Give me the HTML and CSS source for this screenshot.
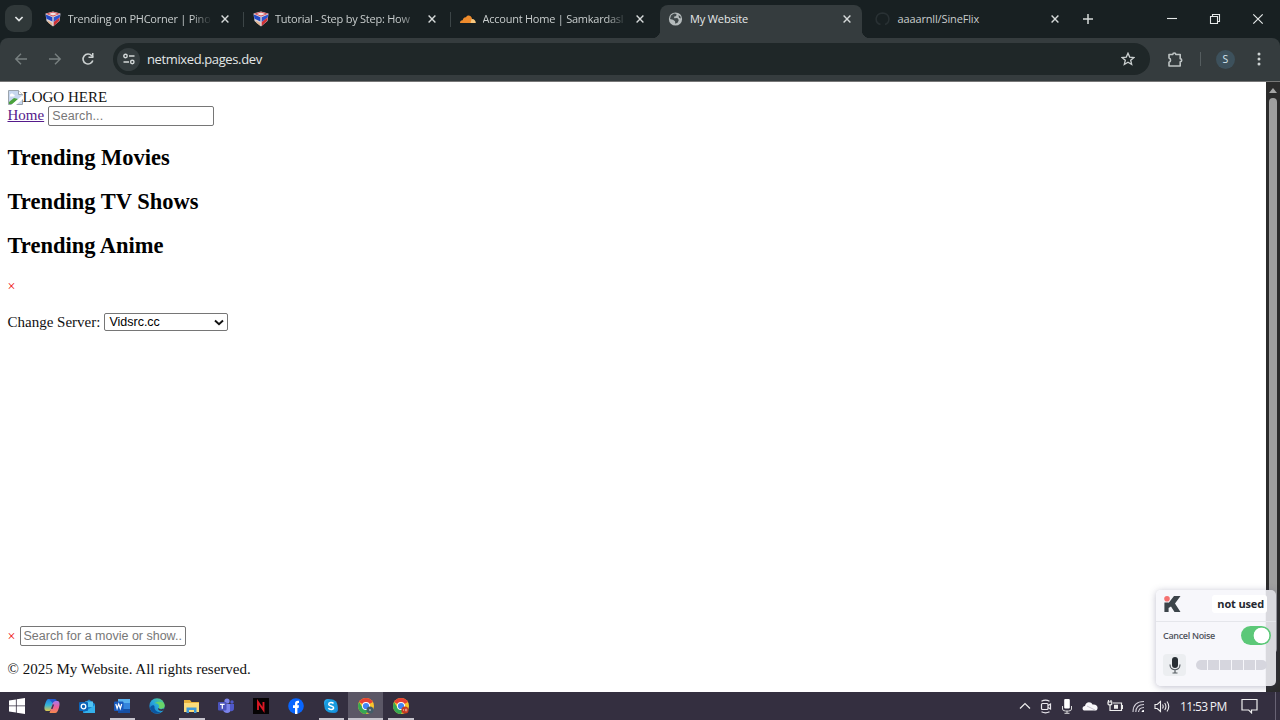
FILE: index.html
```html
<!DOCTYPE html>
<html lang="en">
<head>
<meta charset="utf-8">
<title>My Website</title>
<link rel="stylesheet" href="styles.css">
</head>
<body>
<svg width="0" height="0" class="defs">
  <defs>
    <linearGradient id="cop-l" x1="0" y1="0" x2="0" y2="1"><stop offset="0" stop-color="#1f7fe0"/><stop offset=".5" stop-color="#35b5d8"/><stop offset="1" stop-color="#e0c84a"/></linearGradient>
    <linearGradient id="cop-r" x1="0" y1="0" x2="0" y2="1"><stop offset="0" stop-color="#a978ea"/><stop offset=".5" stop-color="#ec5f9c"/><stop offset="1" stop-color="#f58a4b"/></linearGradient>
    <linearGradient id="edge" x1="0" y1="1" x2="1" y2="0"><stop offset="0" stop-color="#1467b8"/><stop offset=".5" stop-color="#27a8df"/><stop offset="1" stop-color="#5fd66c"/></linearGradient>
    <symbol id="x" viewBox="0 0 10 10"><path d="M1.600 1.600l6.800 6.800M8.400 1.600L1.600 8.400" stroke="#d5d9d9" stroke-width="1.400" fill="none"/></symbol>
    <symbol id="cube" viewBox="0 0 16 16"><path d="M8 .5L15.500 2.500 14.500 10 8 15.500 1.500 10 .5 2.500z" fill="#ddd5da"/><path d="M1 2.800L8 .8l7 2L8 5.500z" fill="#d2474d"/><path d="M3.500 3L8 1.600 12.500 3 8 4.600z" fill="#f3e4e4"/><path d="M.8 3.500L7.400 6.200v4.300L1.500 7.800z" fill="#2348c4"/><path d="M2.500 9.500L7.300 12v2.800L3.500 12z" fill="#e2b48f"/><path d="M8.700 6.200l6.500-2.700-.5 3-6 4.500z" fill="#2c52cf"/><path d="M8.700 11l5.900-4.500-.6 3.500-5.300 5z" fill="#cf3036"/></symbol>
    <symbol id="chrome" viewBox="0 0 16 16"><circle cx="8" cy="8" r="8" fill="#fbc52d"/><path d="M8 8L1.100 4A8 8 0 0 1 14.900 4z" fill="#e64235"/><path d="M1.100 4A8 8 0 0 0 8 16l3.300-6L8 8 4.700 10z" fill="#35a853"/><circle cx="8" cy="8" r="4" fill="#fff"/><circle cx="8" cy="8" r="3.100" fill="#4285f4"/></symbol>
  </defs>
</svg>

<header class="tabstrip">
  <div class="tab-search"><svg width="10" height="8" viewBox="0 0 10 8"><path d="M1.400 2L5 5.600 8.600 2" stroke="#e2e6e6" stroke-width="1.700" fill="none"/></svg></div>
  <div class="tab"><svg class="fav" width="16" height="16"><use href="#cube"/></svg><span class="title fade">Trending on PHCorner | Pino</span><svg class="close"><use href="#x"/></svg></div>
  <div class="tab sep"><svg class="fav" width="16" height="16"><use href="#cube"/></svg><span class="title fade">Tutorial - Step by Step: How</span><svg class="close"><use href="#x"/></svg></div>
  <div class="tab sep"><svg class="fav" width="16" height="16" viewBox="0 0 16 16"><path d="M0 12c0-2 1.200-3 2.600-2.800C3.200 7 4.500 6 6 6.300c1-2.600 5.200-2.400 6 1.300l-.6 4.400z" fill="#ee8b2c"/><path d="M10.500 12l1-4c2.600-.4 4.300 1.600 4.300 4z" fill="#f8c77d"/></svg><span class="title fade">Account Home | Samkardasl</span><svg class="close"><use href="#x"/></svg></div>
  <div class="tab active"><svg class="fav" width="16" height="16" viewBox="0 0 16 16"><circle cx="7.500" cy="8" r="6.600" fill="#b4babb"/><path d="M3 4.500l3-2 2.500.5-.3 2-2.200.8.300 1.500 3-.2 1.500 2-1 2.400-2.500 1.300-.3-2.600-2-1.500L2 8zM10.500 4l2 1.500.3 2-1.800-.7z" fill="#40484a"/></svg><span class="title">My Website</span><svg class="close"><use href="#x"/></svg></div>
  <div class="tab"><svg class="fav" width="16" height="16" viewBox="0 0 16 16"><path d="M5.500 13.500C-1 11.500 0 2.500 7.500 2c8 .5 8 9.500 2.500 11.500" stroke="#293134" stroke-width="1.500" fill="none"/></svg><span class="title">aaaarnll/SineFlix</span><svg class="close"><use href="#x"/></svg></div>
  <div class="newtab"><svg width="12" height="12" viewBox="0 0 12 12"><path d="M6 1v10M1 6h10" stroke="#d5d9d9" stroke-width="1.500"/></svg></div>
  <div class="winbtns">
    <svg width="12" height="12" viewBox="0 0 12 12"><path d="M1 5.500h10" stroke="#e5e8e8" stroke-width="1.100"/></svg>
    <svg width="12" height="12" viewBox="0 0 12 12"><path d="M1.500 3.500h7v7h-7zM3.500 3V1.500h7v7H9" stroke="#e5e8e8" stroke-width="1.100" fill="none"/></svg>
    <svg width="12" height="12" viewBox="0 0 12 12"><path d="M1.300 1.300l9.400 9.400M10.700 1.300l-9.400 9.400" stroke="#e5e8e8" stroke-width="1.200"/></svg>
  </div>
</header>

<div class="strip-base"><nav class="toolbar">
  <svg class="nav-ic" width="14" height="14" viewBox="0 0 14 14"><path d="M13 7H2M7 1.800L1.800 7 7 12.200" stroke="#788081" stroke-width="1.400" fill="none"/></svg>
  <svg class="nav-ic" width="14" height="14" viewBox="0 0 14 14"><path d="M1 7h11M7 1.800L12.200 7 7 12.200" stroke="#788081" stroke-width="1.400" fill="none"/></svg>
  <svg class="nav-ic" width="14" height="14" viewBox="0 0 14 14"><path d="M11.800 8.500A5 5 0 1 1 10.800 3.700L12 5" stroke="#cdd2d2" stroke-width="1.600" fill="none"/><path d="M12.500 1v5h-5V4.600H11V1z" fill="#cdd2d2"/></svg>
  <div class="omnibox">
    <div class="site"><svg width="12" height="12" viewBox="0 0 12 12"><g stroke="#d3d8d8" stroke-width="1.400" fill="none"><circle cx="2.500" cy="3" r="1.700"/><path d="M6 3h5.500M.5 9H6"/><circle cx="9.300" cy="9" r="1.700"/></g></svg></div>
    <span class="url">netmixed.pages.dev</span>
    <svg width="14" height="14" viewBox="0 0 14 14"><path d="M7 1.200l1.700 3.900 4.200.4-3.200 2.800 1 4.200L7 10.300l-3.700 2.200 1-4.200-3.200-2.800 4.200-.4z" stroke="#ccd1d1" stroke-width="1.300" fill="none"/></svg>
  </div>
  <svg class="ext" width="17" height="17" viewBox="0 0 17 17"><path d="M2 3.500h3.800a1.500 1.500 0 0 1 3 0h4.400v4.300a1.500 1.500 0 0 1 0 3v4.200H2v-3.700a2.200 2.200 0 0 0 0-4.200z" stroke="#bec4c4" stroke-width="1.600" fill="none" stroke-linejoin="round"/></svg>
  <i class="divider"></i>
  <span class="avatar">S</span>
  <svg class="dots" width="4" height="16" viewBox="0 0 4 16"><g fill="#ced3d3"><circle cx="2" cy="3" r="1.500"/><circle cx="2" cy="8" r="1.500"/><circle cx="2" cy="13" r="1.500"/></g></svg>
</nav></div>

<div class="view">
  <main class="page">
    <div class="logo"><svg width="15" height="15" viewBox="0 0 15 15"><path d="M.5.500h10l4 4v10H.5z" fill="#c7d7ef" stroke="#9ba4ad"/><path d="M10.500.500v4h4" fill="#fff" stroke="#9ba4ad"/><path d="M2 5.500C2 3 5 3 5.500 4.500 7 4.500 7 6.500 6 6.500H2z" fill="#fff"/><path d="M1 14v-2l5-4 4 1-5 5z" fill="#4aa23c"/><path d="M3 15L15 5v4L8 15z" fill="#fff"/></svg><span>LOGO HERE</span></div>
    <div class="row"><a class="home" href="#">Home</a><input class="field" type="text" placeholder="Search..."></div>
    <h2 class="heading">Trending Movies</h2>
    <h2 class="heading">Trending TV Shows</h2>
    <h2 class="heading">Trending Anime</h2>
    <div class="red-x">×</div>
    <div class="server"><label>Change Server:</label><div class="select"><span>Vidsrc.cc</span><svg width="10" height="7" viewBox="0 0 10 7"><path d="M1 1.500l4 3.800 4-3.800" stroke="#111" stroke-width="1.900" fill="none"/></svg></div></div>
    <div class="row find"><span class="small-x">×</span><input class="field wide" type="text" placeholder="Search for a movie or show..."></div>
    <p class="copyright">© 2025 My Website. All rights reserved.</p>
  </main>
  <aside class="scrollbar"><svg width="8" height="5" viewBox="0 0 8 5"><path d="M4 0l4 5H0z" fill="#a5a5a5"/></svg><i class="thumb"></i></aside>
</div>

<footer class="taskbar">
  <div class="app"><svg width="16" height="16" viewBox="0 0 16 16"><path d="M0 2.400L6.900 1.400v6.100H0zM7.700 1.300L16 0v7.500H7.700zM0 8.300h6.900v6.200L0 13.500zM7.700 8.300H16V16l-8.300-1.300z" fill="#fff"/></svg></div>
  <div class="app"><svg width="16" height="16" viewBox="0 0 16 16"><path d="M5 1h5.500L7 11.500c-.5 1.500-1.500 1.500-2.500 1.500H2C0 12 .2 9 1 6.500 2 3 2.800 1 5 1z" fill="url(#cop-l)"/><path d="M11 15H5.500L9 4.500C9.500 3 10.500 3 11.500 3H14c2 1 1.800 4 1 6.500C14 13 13.200 15 11 15z" fill="url(#cop-r)"/><path d="M5 1h5.500c1.500 0 2 .8 2.400 2h-1.400C9.500 3 9.300 4 8.800 5.200z" fill="#2259cf"/><path d="M8.600 6.500h1.600L8.500 11H7.100z" fill="#3b3650"/></svg></div>
  <div class="app"><svg width="16" height="16" viewBox="0 0 16 16"><path d="M4 6l6-4.500L16 6v9H4z" fill="#1583cf"/><path d="M6 3.500h8V9H6z" fill="#53c4f2"/><path d="M4 15L16 7v8z" fill="#34b1ec"/><rect y="4" width="9" height="9" rx="1" fill="#0b63b7"/><circle cx="4.500" cy="8.500" r="2.300" fill="none" stroke="#fff" stroke-width="1.300"/></svg></div>
  <div class="app open"><svg width="16" height="16" viewBox="0 0 16 16"><rect x="4" y="1" width="12" height="14" rx="1" fill="#3484dc"/><path d="M4 1h12v4H4z" fill="#59b2ef"/><path d="M4 11h12v4H4z" fill="#164fa3"/><rect y="3.500" width="9.500" height="9.500" rx="1" fill="#185abd"/><path d="M1.800 6l1.300 4.500L4.700 6l1.600 4.500L7.700 6" stroke="#fff" stroke-width="1.200" fill="none"/></svg></div>
  <div class="app"><svg width="16" height="16" viewBox="0 0 16 16"><circle cx="8" cy="8" r="7.700" fill="url(#edge)"/><path d="M15.600 7c.5 4-4.600 4.500-6.100 3 2-3.500-1.500-5.500-4.500-4.500 4-3 10-1.500 10.600 1.500z" fill="#68d568"/><path d="M5.500 8.500C5 12 8.500 14.500 12 13.800 9 17 2 15.500 1 10c1-3 4-3.500 4.500-1.500z" fill="#0c55a0"/><path d="M9.500 10c1.500 1.700 4.500 1.500 6 0l-1 2.200C12 14 8 12 9.500 10z" fill="#352f43"/></svg></div>
  <div class="app open"><svg width="17" height="16" viewBox="0 0 17 16"><path d="M1 2h6l1.500 2H16v10H1z" fill="#e8b23c"/><path d="M1 5h15v9H1z" fill="#fbdc7b"/><path d="M3.500 15V9.500h10V15H11v-3H6v3z" fill="#3e9ad8"/></svg></div>
  <div class="app"><svg width="16" height="16" viewBox="0 0 16 16"><circle cx="9" cy="3" r="2.600" fill="#7b83eb"/><circle cx="14" cy="4" r="1.700" fill="#5059c9"/><path d="M5 6h8v5c0 5-7 5-8 1z" fill="#7b83eb"/><path d="M12 6h4v4c0 3-2 3.500-4 3z" fill="#5059c9"/><rect y="4" width="8.500" height="8.500" rx="1" fill="#4b53bc"/><path d="M2 6.300h4.600M4.300 6.300v4.500" stroke="#fff" stroke-width="1.200"/></svg></div>
  <div class="app"><svg width="16" height="16" viewBox="0 0 16 16"><rect width="16" height="16" fill="#050304"/><path d="M5 12v-8l5.500 8v-8" stroke="#db1824" stroke-width="1.900" fill="none"/></svg></div>
  <div class="app"><svg width="16" height="16" viewBox="0 0 16 16"><circle cx="8" cy="8" r="7.800" fill="#0866ff"/><path d="M7 16V9.900H5V7.300h2V6c0-2.500 1.200-3.600 4-3.200V5c-1.400-.1-1.600.2-1.600 1.300v1H11l-.4 2.600H9.400V16z" fill="#fff"/></svg></div>
  <div class="app open"><svg width="16" height="16" viewBox="0 0 16 16"><circle cx="5" cy="5" r="4" fill="#26a9ed"/><circle cx="11" cy="11" r="4" fill="#1689dd"/><circle cx="8" cy="8" r="6.700" fill="#179bdf"/><path d="M10.500 5.500C9.500 4 5.700 4 5.700 6.200c0 2.300 4.900 1.200 4.900 3.500 0 2.300-4.200 2.300-5.200.4" stroke="#fff" stroke-width="1.500" fill="none"/></svg></div>
  <div class="app open current"><svg width="16" height="16" viewBox="0 0 16 16"><use href="#chrome"/><circle cx="12" cy="12" r="3.500" fill="#435d69"/><circle cx="12" cy="12" r="1" fill="#9fb0b8"/></svg></div>
  <div class="app open"><svg width="16" height="16" viewBox="0 0 16 16"><use href="#chrome"/><circle cx="12" cy="12" r="3.600" fill="#c63b22"/><path d="M10.500 11v2M12.500 11h1.200v2h-1.200z" stroke="#f2c7b8" stroke-width=".6" fill="none"/></svg></div>
  <div class="tray">
    <svg width="12" height="8" viewBox="0 0 12 8"><path d="M1 6.500l5-5 5 5" stroke="#eee" stroke-width="1.200" fill="none"/></svg>
    <svg width="12" height="15" viewBox="0 0 12 15"><g stroke="#e8e6ec" stroke-width="1.200" fill="none"><rect x="1.500" y="4.500" width="6.500" height="6" rx="1"/><path d="M8 6.500l2.500-1.500v5L8 8.500M1.500 2.200q4-2 8 0M1.500 12.800q4 2 8 0"/></g></svg>
    <svg width="12" height="15" viewBox="0 0 12 15"><rect x="3.200" y="0" width="5.600" height="9.500" rx="1" fill="#fff"/><path d="M1.500 7v3q0 2 3 2h3q3 0 3-2V7M6 12v2M3.500 14.300h5" stroke="#ddd" fill="none"/></svg>
    <svg width="16" height="10" viewBox="0 0 16 10"><path d="M3 9.500C-.5 9.500 0 5 3 5 3.500.500 9 0 10.500 3.500 14 3 16 5 15.500 7.500c-.3 1.500-1 2-2 2z" fill="#f8f7fa"/><path d="M5 5l8 4" stroke="#b9b5c3" stroke-width=".8"/></svg>
    <svg width="16" height="12" viewBox="0 0 16 12"><g stroke="#eee" stroke-width="1.200" fill="none"><path d="M6 3h8.500v7.500H5M1.500 0v2M4 0v2M1 2h3.800v2q-2 2-3.800 0zM3 5v5.500h2"/></g><path d="M7 4.800h4v4H7zM15 5h1v4h-1z" fill="#eee"/></svg>
    <svg width="13" height="13" viewBox="0 0 13 13"><g stroke="#d5d2dc" stroke-width="1.100" fill="none"><path d="M1 12C1 5 5 1.500 12 1.500M3.800 12C4 7 7 4.500 12 4.500M6.500 12Q7 7.700 12 7.500"/></g><path d="M9.500 12q0-2 2.500-2v2z" fill="#fff"/></svg>
    <svg width="17" height="13" viewBox="0 0 17 13"><g stroke="#eee" stroke-width="1.100" fill="none"><path d="M1 4.500h2.200L6.500 1.500v10L3.200 8.500H1zM8.500 4.500q1.400 2 0 4M10.700 3q2.500 3.500 0 7M13 1.500q3.500 5 0 10"/></g></svg>
    <span class="clock">11:53 PM</span>
    <svg class="note" width="17" height="16" viewBox="0 0 17 16"><path d="M1 1.500h15v10.500h-5.500v2.800L7.700 12H1z" stroke="#eee" stroke-width="1.200" fill="none"/></svg>
    <i class="peek"></i>
  </div>
</footer>

<section class="noise">
  <div class="noise-top"><svg width="17" height="16" viewBox="0 0 17 16"><circle cx="3" cy="2.800" r="2.800" fill="#f57170"/><path d="M.4 6.500h4.200V16H.4zM4.600 7L10 0h6.500L11 7.500 16.500 16h-6L7 10.500 4.600 12z" fill="#3c444a"/></svg><b>not used</b></div>
  <div class="noise-mid"><span>Cancel Noise</span><i class="toggle"></i></div>
  <div class="noise-low"><div class="mic"><svg width="12" height="17" viewBox="0 0 12 17"><rect x="3" y="0" width="6" height="11" rx="3" fill="#282e34"/><path d="M1 7.500c0 7 10 7 10 0M6 12.500v3.500M3.500 16h5" stroke="#555c62" stroke-width="1.200" fill="none"/></svg></div><div class="meter"><i></i><i></i><i></i><i></i><i></i><i></i></div></div>
</section>
</body>
</html>
```
FILE: styles.css
```css
* { box-sizing: border-box; }
body { margin: 0; width: 1280px; height: 720px; overflow: hidden; background: #fff; font-family: "Open Sans", "Noto Sans", sans-serif; display: flex; flex-direction: column; position: relative; }
svg { display: block; flex: none; }
.defs { position: absolute; }

.tabstrip { height: 38px; background: #182022; display: flex; align-items: flex-start; padding: 5px 0 0 5px; flex: none; }
.tab-search { width: 27px; height: 27px; margin-right: 4px; border-radius: 9px; background: #303839; display: flex; align-items: center; justify-content: center; flex: none; }
.tab { width: 207.500px; height: 33px; padding: 0 14px 5px 9px; display: flex; align-items: center; flex: none; position: relative; color: #c8cdcd; font-size: 11px; }
.tab.sep::before { content: ""; position: absolute; left: -1px; top: 7px; width: 1px; height: 15px; background: #3c4547; }
.title { width: 147px; margin-left: 6.500px; white-space: nowrap; line-height: 18px; letter-spacing: -.14px; flex: none; }
.fade { letter-spacing: -.24px; -webkit-mask-image: linear-gradient(90deg, #000 84%, transparent 98%); mask-image: linear-gradient(90deg, #000 84%, transparent 98%); }
.close { width: 10px; height: 10px; margin-left: 5px; }
.tab.active { color: #e5e9e9; z-index: 0; }
.tab.active::before { content: ""; position: absolute; z-index: -1; left: 1.500px; right: 4px; top: 0; bottom: 0; border-radius: 8px 8px 0 0; background: #353c3e; }
.tab.active::after { content: ""; position: absolute; z-index: -1; left: -7px; right: -4px; bottom: 0; height: 8px; background: radial-gradient(circle at 0 0, transparent 8px, #353c3e 8.500px) left / 8.500px 8px no-repeat, radial-gradient(circle at 100% 0, transparent 8px, #353c3e 8.500px) right / 8px 8px no-repeat; }
.newtab { margin: 8px 0 0 8px; flex: none; }
.winbtns { display: flex; gap: 31px; margin: 8px 16px 0 auto; }

.strip-base { background: #182022; flex: none; }
.toolbar { height: 44px; background: #353c3e; border-bottom: 1px solid #777; border-radius: 8px 8px 0 0; display: flex; align-items: center; padding: 0 19px 1px 14px; }
.nav-ic { margin-right: 19.500px; }
.omnibox { width: 1037px; height: 32px; margin-left: -1.500px; background: #1f2728; border-radius: 16px; display: flex; align-items: center; padding: 0 15px 0 4px; flex: none; }
.site { width: 23px; height: 23px; border-radius: 50%; background: #343c3e; display: flex; align-items: center; justify-content: center; }
.url { margin-left: 7px; flex: 1; color: #e2e6e6; font-size: 13px; line-height: 20px; letter-spacing: -.38px; }
.ext { margin-left: 17px; }
.divider { width: 1px; height: 14px; background: #555d5f; margin-left: 16px; }
.avatar { width: 19px; height: 19px; border-radius: 50%; background: #3d515c; color: #d5e5ee; font-size: 10.500px; line-height: 19px; text-align: center; margin-left: 15px; }
.dots { margin-left: auto; }

.view { display: flex; height: 610px; flex: none; }
.page { flex: 1; padding: 7px 0 0 7.500px; font: 15px/17px "Liberation Serif", serif; color: #111; }
.logo { display: flex; height: 17px; align-items: center; }
.row { display: flex; height: 20px; align-items: center; }
.home { color: #551a8b; margin-right: 4px; padding-bottom: 1px; }
.field { width: 166px; height: 20px; padding: 1px 3px; border: 1px solid #767676; border-radius: 2px; font: 12.500px "Liberation Sans", sans-serif; letter-spacing: .12px; }
.field::placeholder { color: #777; }
.wide { letter-spacing: 0; }
.heading { margin: 19px 0 0; font-size: 22.500px; line-height: 25px; height: 25px; color: #000; }
.red-x { margin-top: 20px; color: #e00; height: 17px; font-size: 14px; }
.server { margin-top: 18px; height: 18px; display: flex; align-items: center; }
.select { width: 124px; height: 18px; margin-left: 4px; padding: 0 3px 0 4px; border: 1px solid #767676; border-radius: 2px; display: flex; align-items: center; justify-content: space-between; font: 12.500px "Liberation Sans", sans-serif; color: #000; }
.find { margin-top: 295px; }
.small-x { color: #e00; width: 12px; font-size: 14px; }
.copyright { margin: 15px 0 0; }
.scrollbar { width: 14px; background: #2b2b2b; display: flex; flex-direction: column; align-items: center; padding-top: 6px; }
.thumb { width: 8px; height: 555px; margin-top: 5px; border-radius: 4px; background: #9f9f9f; }

.taskbar { height: 28px; flex: none; background: #342f40; display: flex; align-items: stretch; }
.app { width: 34.850px; display: flex; align-items: center; justify-content: center; flex: none; position: relative; }
.app.open::after { content: ""; position: absolute; left: 5px; right: 4px; bottom: 0; height: 2px; background: #c6c3cc; }
.app.current { background: #5b5766; }
.app.current::after { left: 0; right: 0; }
.tray { margin-left: auto; display: flex; align-items: center; gap: 9px; color: #f2f1f4; padding-right: 4px; }
.clock { font-size: 12px; letter-spacing: -.65px; width: 45px; white-space: nowrap; }
.note { margin-left: 7px; }
.peek { width: 1px; height: 28px; background: #686374; margin-left: 8px; }

.noise { position: absolute; left: 1156px; top: 590px; width: 120px; height: 96px; border-radius: 5px; background: linear-gradient(90deg, #f7f7fb 91%, #d9d9de 92%); box-shadow: 0 1px 7px rgba(70, 70, 110, .35); color: #252830; }
.noise-top { height: 32px; border-bottom: 1px solid #e5e6eb; display: flex; align-items: center; padding: 0 9px 3px 8px; justify-content: space-between; }
.noise-top b { background: #fff; border-radius: 3px; padding: 0 3px 0 5px; font-size: 11px; letter-spacing: -.15px; line-height: 18px; white-space: nowrap; }
.noise-mid { height: 27px; display: flex; align-items: center; justify-content: space-between; padding: 0 5px 0 7px; font-size: 9px; letter-spacing: -.32px; font-weight: 600; color: #50545b; white-space: nowrap; }
.toggle { width: 30px; height: 19px; border-radius: 10px; background: radial-gradient(circle at 20.500px 50%, #fff 7.500px, #5cc878 8.200px); }
.noise-low { display: flex; align-items: center; padding: 5px 7px 0; }
.mic { width: 23px; height: 22px; border-radius: 4px; background: #eceef1; display: flex; align-items: center; justify-content: center; }
.meter { display: flex; gap: 1px; margin-left: 10px; border-radius: 5px; overflow: hidden; }
.meter i { width: 11px; height: 10px; background: #d6d6de; }
```
